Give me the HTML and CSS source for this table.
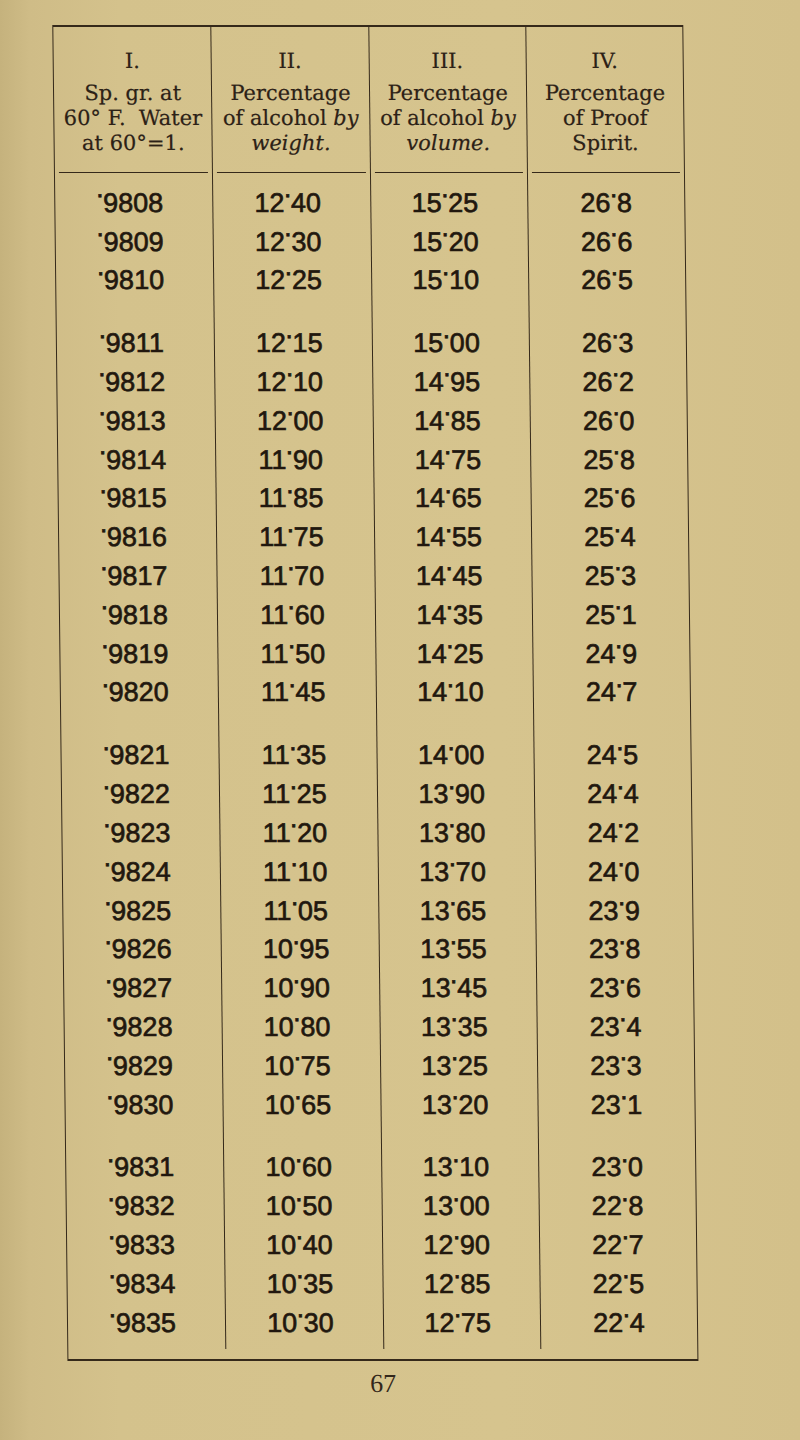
FILE: index.html
```html
<!DOCTYPE html>
<html lang="en">
<head>
<meta charset="utf-8">
<title>Table 67</title>
<link rel="stylesheet" href="styles.css">
</head>
<body>
<div class="page">
  <div class="table">
    <div class="h"><div class="in"><div class="n">I.</div><div class="l">Sp. gr. at</div><div class="l">60° F.&nbsp; Water</div><div class="l">at 60°=1.</div></div></div>
    <div class="h dv"><div class="in"><div class="n">II.</div><div class="l">Percentage</div><div class="l">of alcohol <i>by</i></div><div class="l"><i>weight.</i></div></div></div>
    <div class="h dv"><div class="in"><div class="n">III.</div><div class="l">Percentage</div><div class="l">of alcohol <i>by</i></div><div class="l"><i>volume.</i></div></div></div>
    <div class="h dv"><div class="in"><div class="n">IV.</div><div class="l">Percentage</div><div class="l">of Proof</div><div class="l">Spirit.</div></div></div>

    <div class="v p"><span class="d">·</span>9808</div><div class="v p dv">12<span class="d">·</span>40</div><div class="v p dv">15<span class="d">·</span>25</div><div class="v dv">26<span class="d">·</span>8</div>
    <div class="v p"><span class="d">·</span>9809</div><div class="v p dv">12<span class="d">·</span>30</div><div class="v p dv">15<span class="d">·</span>20</div><div class="v dv">26<span class="d">·</span>6</div>
    <div class="v p"><span class="d">·</span>9810</div><div class="v p dv">12<span class="d">·</span>25</div><div class="v p dv">15<span class="d">·</span>10</div><div class="v dv">26<span class="d">·</span>5</div>

    <div class="v p g"><span class="d">·</span>9811</div><div class="v p dv g">12<span class="d">·</span>15</div><div class="v p dv g">15<span class="d">·</span>00</div><div class="v dv g">26<span class="d">·</span>3</div>
    <div class="v p"><span class="d">·</span>9812</div><div class="v p dv">12<span class="d">·</span>10</div><div class="v p dv">14<span class="d">·</span>95</div><div class="v dv">26<span class="d">·</span>2</div>
    <div class="v p"><span class="d">·</span>9813</div><div class="v p dv">12<span class="d">·</span>00</div><div class="v p dv">14<span class="d">·</span>85</div><div class="v dv">26<span class="d">·</span>0</div>
    <div class="v p"><span class="d">·</span>9814</div><div class="v p dv">11<span class="d">·</span>90</div><div class="v p dv">14<span class="d">·</span>75</div><div class="v dv">25<span class="d">·</span>8</div>
    <div class="v p"><span class="d">·</span>9815</div><div class="v p dv">11<span class="d">·</span>85</div><div class="v p dv">14<span class="d">·</span>65</div><div class="v dv">25<span class="d">·</span>6</div>
    <div class="v p"><span class="d">·</span>9816</div><div class="v p dv">11<span class="d">·</span>75</div><div class="v p dv">14<span class="d">·</span>55</div><div class="v dv">25<span class="d">·</span>4</div>
    <div class="v p"><span class="d">·</span>9817</div><div class="v p dv">11<span class="d">·</span>70</div><div class="v p dv">14<span class="d">·</span>45</div><div class="v dv">25<span class="d">·</span>3</div>
    <div class="v p"><span class="d">·</span>9818</div><div class="v p dv">11<span class="d">·</span>60</div><div class="v p dv">14<span class="d">·</span>35</div><div class="v dv">25<span class="d">·</span>1</div>
    <div class="v p"><span class="d">·</span>9819</div><div class="v p dv">11<span class="d">·</span>50</div><div class="v p dv">14<span class="d">·</span>25</div><div class="v dv">24<span class="d">·</span>9</div>
    <div class="v p"><span class="d">·</span>9820</div><div class="v p dv">11<span class="d">·</span>45</div><div class="v p dv">14<span class="d">·</span>10</div><div class="v dv">24<span class="d">·</span>7</div>

    <div class="v p g"><span class="d">·</span>9821</div><div class="v p dv g">11<span class="d">·</span>35</div><div class="v p dv g">14<span class="d">·</span>00</div><div class="v dv g">24<span class="d">·</span>5</div>
    <div class="v p"><span class="d">·</span>9822</div><div class="v p dv">11<span class="d">·</span>25</div><div class="v p dv">13<span class="d">·</span>90</div><div class="v dv">24<span class="d">·</span>4</div>
    <div class="v p"><span class="d">·</span>9823</div><div class="v p dv">11<span class="d">·</span>20</div><div class="v p dv">13<span class="d">·</span>80</div><div class="v dv">24<span class="d">·</span>2</div>
    <div class="v p"><span class="d">·</span>9824</div><div class="v p dv">11<span class="d">·</span>10</div><div class="v p dv">13<span class="d">·</span>70</div><div class="v dv">24<span class="d">·</span>0</div>
    <div class="v p"><span class="d">·</span>9825</div><div class="v p dv">11<span class="d">·</span>05</div><div class="v p dv">13<span class="d">·</span>65</div><div class="v dv">23<span class="d">·</span>9</div>
    <div class="v p"><span class="d">·</span>9826</div><div class="v p dv">10<span class="d">·</span>95</div><div class="v p dv">13<span class="d">·</span>55</div><div class="v dv">23<span class="d">·</span>8</div>
    <div class="v p"><span class="d">·</span>9827</div><div class="v p dv">10<span class="d">·</span>90</div><div class="v p dv">13<span class="d">·</span>45</div><div class="v dv">23<span class="d">·</span>6</div>
    <div class="v p"><span class="d">·</span>9828</div><div class="v p dv">10<span class="d">·</span>80</div><div class="v p dv">13<span class="d">·</span>35</div><div class="v dv">23<span class="d">·</span>4</div>
    <div class="v p"><span class="d">·</span>9829</div><div class="v p dv">10<span class="d">·</span>75</div><div class="v p dv">13<span class="d">·</span>25</div><div class="v dv">23<span class="d">·</span>3</div>
    <div class="v p"><span class="d">·</span>9830</div><div class="v p dv">10<span class="d">·</span>65</div><div class="v p dv">13<span class="d">·</span>20</div><div class="v dv">23<span class="d">·</span>1</div>

    <div class="v p g"><span class="d">·</span>9831</div><div class="v p dv g">10<span class="d">·</span>60</div><div class="v p dv g">13<span class="d">·</span>10</div><div class="v dv g">23<span class="d">·</span>0</div>
    <div class="v p"><span class="d">·</span>9832</div><div class="v p dv">10<span class="d">·</span>50</div><div class="v p dv">13<span class="d">·</span>00</div><div class="v dv">22<span class="d">·</span>8</div>
    <div class="v p"><span class="d">·</span>9833</div><div class="v p dv">10<span class="d">·</span>40</div><div class="v p dv">12<span class="d">·</span>90</div><div class="v dv">22<span class="d">·</span>7</div>
    <div class="v p"><span class="d">·</span>9834</div><div class="v p dv">10<span class="d">·</span>35</div><div class="v p dv">12<span class="d">·</span>85</div><div class="v dv">22<span class="d">·</span>5</div>
    <div class="v p last"><span class="d">·</span>9835</div><div class="v p dv last">10<span class="d">·</span>30</div><div class="v p dv last">12<span class="d">·</span>75</div><div class="v dv last">22<span class="d">·</span>4</div>
  </div>
  <div class="pg">67</div>
</div>
</body>
</html>
```

FILE: styles.css
```css
html, body {
  margin: 0;
  padding: 0;
}
body {
  min-height: 1440px;
  background: linear-gradient(to right, #c5b27d 0px, #cfbc87 30px, #d4c28c 120px, #d6c48e 500px, #d3c08a 800px);
  color: #21170e;
  font-family: "Liberation Sans", Arial, sans-serif;
}
.page {
  width: 631px;
  padding: 25px 0 0 52px;
  transform: skewX(0.65deg);
  transform-origin: 0 0;
}
.table {
  display: grid;
  grid-template-columns: repeat(4, 1fr);
  border-left: 1.5px solid #35291a;
  border-right: 1.5px solid #35291a;
  border-top: 2px solid #35291a;
  border-bottom: 2px solid #35291a;
  padding-bottom: 10px;
}
.dv {
  border-left: 1.5px solid #35291a;
}
.h {
  padding: 0 4px 11px;
  font-family: "DejaVu Serif", "Liberation Serif", serif;
  font-size: 21px;
  color: #2c2116;
  text-align: center;
  -webkit-text-stroke: 0.2px #2c2116;
}
.h .in {
  padding: 21px 0 15.8px;
  border-bottom: 1.5px solid #35291a;
}
.n {
  line-height: 26px;
  margin-bottom: 7px;
}
.l {
  line-height: 25px;
  white-space: nowrap;
}
.l i {
  font-style: italic;
}
.v {
  font-size: 27px;
  line-height: 38.8px;
  text-align: center;
  white-space: nowrap;
  -webkit-text-stroke: 0.65px #21170e;
}
.v.p {
  padding-right: 8px;
}
.v.g {
  padding-top: 24.1px;
}
.v.last {
  padding-bottom: 7px;
}
.d {
  margin: 0 -1.25px;
  line-height: 0;
  vertical-align: 0.32em;
}
.pg {
  margin-top: 8px;
  font-family: "Liberation Serif", "Times New Roman", serif;
  font-size: 26px;
  line-height: 30px;
  text-align: center;
  color: #33271a;
}
```
